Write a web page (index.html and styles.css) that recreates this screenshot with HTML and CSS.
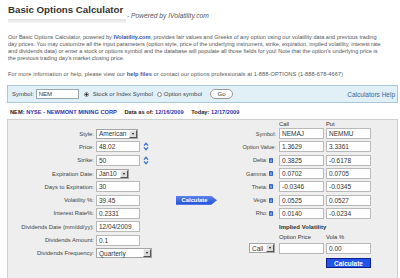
FILE: index.html
```html
<!DOCTYPE html>
<html lang="en">
<head>
    <meta charset="UTF-8">
    <meta name="viewport" content="width=device-width, initial-scale=1.0">
    <title>Basic Options Calculator</title>
    <link rel="stylesheet" href="styles.css">
</head>
<body>
    <div class="header">
        <div class="title-block">
            <h1>Basic Options Calculator</h1>
            <div class="title-bar"></div>
        </div>
        <span class="powered">- Powered by IVolatility.com</span>
    </div>

    <p class="intro">Our Basic Options Calculator, powered by <a href="#">IVolatility.com</a>, provides fair values and Greeks of any option using our volatility data and previous trading<br>day prices. You may customize all the input parameters (option style, price of the underlying instrument, strike, expiration, implied volatility, interest rate<br>and dividends data) or enter a stock or options symbol and the database will populate all those fields for you! Note that the option's underlying price is<br>the previous trading day's market closing price.</p>

    <p class="intro more">For more information or help, please view our <a href="#">help files</a> or contact our options professionals at 1-888-OPTIONS (1-888-678-4667)</p>

    <div class="symbol-bar">
        <label for="symbol">Symbol:</label>
        <input type="text" id="symbol" class="symbol-input" value="NEM">
        <span class="radio checked"></span><span class="radio-label">Stock or Index Symbol</span>
        <span class="radio second"></span><span class="radio-label tight">Option symbol</span>
        <button class="go">Go</button>
        <a href="#" class="help">Calculators Help</a>
    </div>

    <div class="quote">
        <b>NEM:</b> <b class="blue">NYSE - NEWMONT MINING CORP</b>
        <span class="gap"><b>Data as of:</b> <b class="blue">12/16/2009</b></span>
        <span class="gap"><b>Today:</b> <b class="blue">12/17/2009</b></span>
    </div>

    <div class="panel">
        <div class="params">
            <label class="lbl">Style:</label>
            <span class="select w-style">American<span class="drop"></span></span>

            <label class="lbl">Price:</label>
            <input class="field" type="text" value="48.02">
            <svg class="spin" width="6" height="9" viewBox="0 0 6 9"><polyline points="1,3.6 3,1.4 5,3.6"/><polyline points="1,5.4 3,7.6 5,5.4"/></svg>

            <label class="lbl">Strike:</label>
            <input class="field" type="text" value="50">
            <svg class="spin" width="6" height="9" viewBox="0 0 6 9"><polyline points="1,3.6 3,1.4 5,3.6"/><polyline points="1,5.4 3,7.6 5,5.4"/></svg>

            <label class="lbl">Expiration Date:</label>
            <span class="select w-exp">Jan10<span class="drop"></span></span>

            <label class="lbl">Days to Expiration:</label>
            <input class="field" type="text" value="30">

            <label class="lbl">Volatility %:</label>
            <input class="field" type="text" value="39.45">

            <label class="lbl">Interest Rate%:</label>
            <input class="field" type="text" value="0.2331">

            <label class="lbl">Dividends Date (mm/dd/yy):</label>
            <input class="field" type="text" value="12/04/2009">

            <label class="lbl">Dividends Amount:</label>
            <input class="field" type="text" value="0.1">

            <label class="lbl">Dividends Frequency:</label>
            <span class="select w-freq">Quarterly<span class="drop"></span></span>

            <button class="calc-arrow">Calculate</button>
        </div>

        <div class="results">
            <span class="head c2">Call</span>
            <span class="head c3">Put</span>

            <label class="lbl">Symbol:</label>
            <input class="out" type="text" value="NEMAJ">
            <input class="out" type="text" value="NEMMU">

            <label class="lbl">Option Value:</label>
            <input class="out" type="text" value="1.3629">
            <input class="out" type="text" value="3.3361">

            <label class="lbl">Delta: <svg class="info" width="4" height="5" viewBox="0 0 4 5"><rect width="4" height="5" rx="0.8"/><rect class="i" x="1.6" y="0.8" width="0.8" height="0.7"/><rect class="i" x="1.6" y="2" width="0.8" height="2.2"/></svg></label>
            <input class="out" type="text" value="0.3825">
            <input class="out" type="text" value="-0.6178">

            <label class="lbl">Gamma: <svg class="info" width="4" height="5" viewBox="0 0 4 5"><rect width="4" height="5" rx="0.8"/><rect class="i" x="1.6" y="0.8" width="0.8" height="0.7"/><rect class="i" x="1.6" y="2" width="0.8" height="2.2"/></svg></label>
            <input class="out" type="text" value="0.0702">
            <input class="out" type="text" value="0.0705">

            <label class="lbl">Theta: <svg class="info" width="4" height="5" viewBox="0 0 4 5"><rect width="4" height="5" rx="0.8"/><rect class="i" x="1.6" y="0.8" width="0.8" height="0.7"/><rect class="i" x="1.6" y="2" width="0.8" height="2.2"/></svg></label>
            <input class="out" type="text" value="-0.0346">
            <input class="out" type="text" value="-0.0345">

            <label class="lbl">Vega: <svg class="info" width="4" height="5" viewBox="0 0 4 5"><rect width="4" height="5" rx="0.8"/><rect class="i" x="1.6" y="0.8" width="0.8" height="0.7"/><rect class="i" x="1.6" y="2" width="0.8" height="2.2"/></svg></label>
            <input class="out" type="text" value="0.0525">
            <input class="out" type="text" value="0.0527">

            <label class="lbl">Rho: <svg class="info" width="4" height="5" viewBox="0 0 4 5"><rect width="4" height="5" rx="0.8"/><rect class="i" x="1.6" y="0.8" width="0.8" height="0.7"/><rect class="i" x="1.6" y="2" width="0.8" height="2.2"/></svg></label>
            <input class="out" type="text" value="0.0140">
            <input class="out" type="text" value="-0.0234">

            <span class="iv-title">Implied Volatility</span>
            <span class="sub c2">Option Price</span>
            <span class="sub c3">Vola %</span>

            <span class="select w-call">Call<span class="drop"></span></span>
            <input class="out" type="text" value="">
            <input class="out" type="text" value="0.00">

            <button class="calc">Calculate</button>
        </div>
    </div>
</body>
</html>
```

FILE: styles.css
```css
body {
    margin: 0;
    padding: 0 2px 0 7px;
    font-family: "Liberation Sans", Arial, sans-serif;
    color: #333;
    background: #fff;
}

/* title */
.header {
    display: flex;
    align-items: flex-end;
    padding-left: 1px;
}

.title-block {
    width: 118px;
}

h1 {
    font-size: 9.7px;
    line-height: 12px;
    margin: 4px 0 0;
    color: #333;
    white-space: nowrap;
}

.title-bar {
    height: 4px;
    margin-top: 3px;
    background: linear-gradient(#e2e2e2, #f6f6f6);
}

.powered {
    font-size: 6.7px;
    line-height: 7px;
    font-style: italic;
    color: #555;
    margin: 0 0 4px 1px;
}

/* intro text */
.intro {
    font-size: 5.6px;
    line-height: 7px;
    color: #555;
    margin: 11px 0 0;
    padding-left: 1px;
    white-space: nowrap;
}

.intro a {
    color: #3355aa;
    font-weight: bold;
    text-decoration: none;
}

.intro.more {
    margin-top: 8.5px;
    letter-spacing: 0.1px;
}

/* symbol bar */
.symbol-bar {
    display: flex;
    align-items: center;
    height: 16px;
    margin-top: 7.5px;
    padding: 0 2px 0 4px;
    border: 1px solid #a9c8dc;
    background: #e1eff7;
    font-size: 6px;
    color: #444;
}

.symbol-input {
    width: 43px;
    height: 10px;
    box-sizing: border-box;
    margin: 0 0 0 2px;
    padding: 0 2px;
    border: 1px solid #9aa8b4;
    font-family: inherit;
    font-size: 6px;
    color: #333;
}

.radio {
    width: 5px;
    height: 5px;
    box-sizing: border-box;
    border: 1px solid #888;
    border-radius: 50%;
    background: #fff;
    margin-left: 5px;
}

.radio.second {
    margin-left: 4px;
}

.radio.checked {
    background: radial-gradient(#222 45%, #fff 55%);
}

.radio-label {
    margin-left: 4px;
}

.radio-label.tight {
    margin-left: 2px;
}

.go {
    width: 23px;
    height: 10px;
    margin-left: 8px;
    padding: 0;
    border: 1px solid #999;
    border-radius: 5px;
    background: #fff;
    font-family: inherit;
    font-size: 6px;
    color: #333;
}

.help {
    margin-left: auto;
    font-size: 6.5px;
    color: #336699;
    text-decoration: none;
}

/* quote line */
.quote {
    font-size: 5.7px;
    line-height: 7px;
    margin-top: 6px;
    padding-left: 3px;
    color: #222;
}

.quote .blue {
    color: #3333aa;
}

.quote .gap {
    margin-left: 6px;
}

/* calculator panel */
.panel {
    display: flex;
    height: 170px;
    margin-top: 3px;
    border: 1px solid #cfcfcf;
    background: #eeeeee;
}

.params {
    display: grid;
    grid-template-columns: 88px 44px 36px 42px;
    grid-auto-rows: 13.3px;
    align-items: center;
    margin-top: 7px;
    align-self: flex-start;
}

.lbl {
    grid-column: 1;
    justify-self: end;
    padding-right: 2px;
    font-size: 5.9px;
    color: #444;
    display: flex;
    align-items: center;
}

.field {
    grid-column: 2;
    width: 44px;
    height: 11px;
    box-sizing: border-box;
    margin: 0;
    padding: 0 2px;
    border: 1px solid #b9b9b9;
    font-family: inherit;
    font-size: 6.5px;
    color: #333;
    background: #fff;
}

.spin {
    grid-column: 3;
    margin-left: 3px;
    fill: none;
    stroke: #3a6fd6;
    stroke-width: 1.4;
}

.select {
    grid-column: 2;
    display: flex;
    align-items: center;
    justify-content: space-between;
    height: 10px;
    box-sizing: border-box;
    padding: 0 0 0 2px;
    border: 1px solid #a5a5a5;
    background: #fff;
    font-size: 6.5px;
    color: #333;
}

.drop {
    width: 8px;
    height: 8px;
    box-sizing: border-box;
    border: 1px solid;
    border-color: #f4f4f4 #555 #555 #f4f4f4;
    background: #dcdcdc;
    display: flex;
    align-items: center;
    justify-content: center;
}

.drop::after {
    content: "";
    border-left: 1.5px solid transparent;
    border-right: 1.5px solid transparent;
    border-top: 2px solid #111;
}

.w-style { width: 42px; }
.w-exp { width: 33px; }
.w-freq { width: 56px; }

.calc-arrow {
    grid-column: 4;
    grid-row: 6;
    width: 41px;
    height: 9px;
    padding: 0 4px 0 0;
    border: 0;
    background: linear-gradient(#5b82ee, #1f4fd8);
    clip-path: polygon(0 0, 86% 0, 100% 50%, 86% 100%, 0 100%);
    font-family: inherit;
    font-size: 5.8px;
    font-weight: bold;
    color: #fff;
}

/* results */
.results {
    display: grid;
    grid-template-columns: 59px 45px 45px;
    grid-template-rows: 7px repeat(7, 13.3px) 11px 11.2px 12.4px 17.6px;
    column-gap: 2px;
    align-items: center;
    align-self: flex-start;
}

.results .lbl {
    padding-right: 1px;
    font-size: 5.6px;
}

.info {
    margin: 0 3px 0 1.5px;
    fill: #2f5fcf;
}

.info .i {
    fill: #fff;
}

.head, .sub {
    font-size: 5.8px;
    color: #333;
}

.c2 { grid-column: 2; }
.c3 { grid-column: 3; }

.out {
    width: 45px;
    height: 11px;
    box-sizing: border-box;
    margin: 0;
    padding: 0 2px;
    border: 1px solid #b9b9b9;
    font-family: inherit;
    font-size: 6.5px;
    color: #333;
    background: #fff;
}

.iv-title {
    grid-column: 2 / 4;
    align-self: end;
    font-size: 6px;
    line-height: 7px;
    font-weight: bold;
    color: #333;
}

.w-call {
    grid-column: 1;
    justify-self: end;
    width: 26px;
    margin-right: 2px;
}

.calc {
    grid-column: 3;
    width: 45px;
    height: 10px;
    padding: 0;
    border: 1px solid #0a1f8a;
    background: #2253ea;
    font-family: inherit;
    font-size: 6.5px;
    font-weight: bold;
    color: #fff;
}
```
